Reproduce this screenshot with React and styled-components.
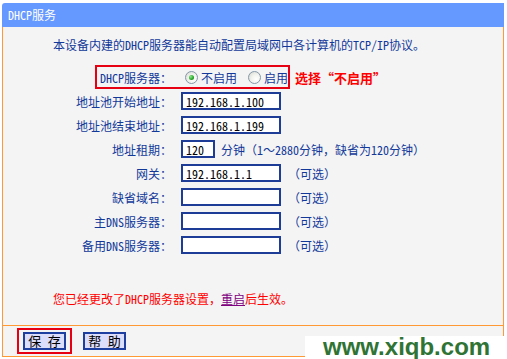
import styled, { createGlobalStyle } from 'styled-components';

const GlobalStyle = createGlobalStyle`
  html, body {
    margin: 0;
    padding: 0;
    background: #fff;
  }
  body {
    font-family: "Noto Sans Mono CJK SC", "Noto Sans CJK SC", sans-serif;
    font-size: 12px;
  }
`;

const Page = styled.div`
  position: relative;
  width: 507px;
  height: 359px;
  padding: 3px 0 0 2px;
  box-sizing: border-box;
  overflow: hidden;
`;

const Panel = styled.div`
  width: 502px;
`;

const TitleBar = styled.div`
  height: 24px;
  line-height: 24px;
  padding-left: 6px;
  background: #6699ff;
  color: #fff;
  border-top-left-radius: 3px;
`;

const Body = styled.div`
  background: #f4f4f4;
  border-left: 1px solid #ff9933;
  border-right: 1px solid #ff9933;
`;

const Main = styled.section`
  height: 298px;
  box-sizing: border-box;
  padding-top: 9px;
`;

const Intro = styled.p`
  margin: 0 0 11px;
  padding-left: 50px;
  line-height: 18px;
  color: #12399a;
`;

const SwitchRow = styled.div`
  display: flex;
  align-items: center;
  padding-left: 92px;
  height: 24px;
`;

const Highlight = styled.div`
  display: flex;
  align-items: center;
  height: 24px;
  box-sizing: border-box;
  border: 2px solid #e60012;
`;

const Row = styled.div`
  display: grid;
  grid-template-columns: ${p => p.$labelWidth || 169}px 1fr;
  column-gap: 9px;
  align-items: center;
  height: 24px;
`;

const Label = styled.label`
  text-align: right;
  white-space: nowrap;
  color: #12399a;
`;

const Field = styled.div`
  display: flex;
  align-items: center;
  white-space: nowrap;
`;

const RadioOption = styled.span`
  display: inline-flex;
  align-items: center;
  gap: 3px;
  margin-left: ${p => p.$offset}px;
  color: #12399a;
`;

const RadioDot = styled.span`
  position: relative;
  width: 11px;
  height: 11px;
  border-radius: 50%;
  border: 1px solid #8597a8;
  background: radial-gradient(circle at 65% 65%, #ffffff 0%, #f2f2ee 45%, #d6d6cf 100%);

  &::after {
    content: '';
    display: ${p => (p.$checked ? 'block' : 'none')};
    position: absolute;
    left: 3px;
    top: 3px;
    width: 5px;
    height: 5px;
    border-radius: 50%;
    background: radial-gradient(circle at 35% 35%, #8ee88e 0%, #22a322 60%, #137913 100%);
  }
`;

const Annotation = styled.span`
  margin-left: 5px;
  color: #ff0000;
  font-size: 13px;
  font-weight: bold;
`;

const TextInput = styled.input`
  width: ${p => p.$width}px;
  height: 18px;
  box-sizing: border-box;
  margin: 0;
  padding: 0 3px;
  border: 2px solid #1d3c98;
  background: #fff;
  color: #000;
  font: inherit;
  font-size: 12px;
`;

const Hint = styled.span`
  margin-left: ${p => p.$gap}px;
  color: #12399a;
`;

const Message = styled.p`
  margin: 33px 0 0;
  padding-left: 50px;
  line-height: 18px;
  color: #ff0000;

  a {
    color: #800080;
    text-decoration: underline;
  }
`;

const Footer = styled.div`
  display: flex;
  align-items: center;
  gap: 11px;
  padding: 2px 0 2px 14px;
  border-top: 1px solid #ff9933;
  border-bottom: 1px solid #ff9933;
`;

const SaveMark = styled.div`
  display: flex;
  padding: 2px 4px;
  border: 2px solid #e60012;
`;

const Button = styled.button`
  width: 43px;
  height: 18px;
  margin: 0;
  padding: 0;
  border: 2px solid #1f3fa0;
  background: #dcdcfb;
  color: #000;
  font: inherit;
  font-size: 13px;
  line-height: 14px;
  white-space: pre;
`;

const Watermark = styled.div`
  position: absolute;
  right: 0;
  bottom: 0;
  width: 202px;
  height: 23px;
  padding-left: 18px;
  box-sizing: border-box;
  background: #fff;
  color: #2f7434;
  font-family: "Liberation Sans", Arial, sans-serif;
  font-size: 24px;
  font-weight: bold;
  line-height: 22px;
`;

const fields = [
  { label: '地址池开始地址：', value: '192.168.1.100', width: 100 },
  { label: '地址池结束地址：', value: '192.168.1.199', width: 100 },
  { label: '地址租期：', value: '120', width: 34, hint: '分钟（1～2880分钟，缺省为120分钟）', gap: 6 },
  { label: '网关：', value: '192.168.1.1', width: 100, hint: '（可选）', gap: 7 },
  { label: '缺省域名：', value: '', width: 100, hint: '（可选）', gap: 7 },
  { label: '主DNS服务器：', value: '', width: 100, hint: '（可选）', gap: 7 },
  { label: '备用DNS服务器：', value: '', width: 100, hint: '（可选）', gap: 7 },
];

export default function App() {
  return (
    <Page>
      <GlobalStyle />
      <Panel>
        <TitleBar>DHCP服务</TitleBar>
        <Body>
          <Main>
            <Intro>本设备内建的DHCP服务器能自动配置局域网中各计算机的TCP/IP协议。</Intro>

            <SwitchRow>
              <Highlight>
                <Row $labelWidth={75}>
                  <Label>DHCP服务器：</Label>
                  <Field>
                    <RadioOption $offset={4}>
                      <RadioDot $checked />
                      不启用
                    </RadioOption>
                    <RadioOption $offset={11}>
                      <RadioDot />
                      启用
                    </RadioOption>
                  </Field>
                </Row>
              </Highlight>
              <Annotation>选择“不启用”</Annotation>
            </SwitchRow>

            {fields.map(f => (
              <Row key={f.label}>
                <Label>{f.label}</Label>
                <Field>
                  <TextInput $width={f.width} defaultValue={f.value} />
                  {f.hint && <Hint $gap={f.gap}>{f.hint}</Hint>}
                </Field>
              </Row>
            ))}

            <Message>
              您已经更改了DHCP服务器设置，<a href="#">重启</a>后生效。
            </Message>
          </Main>

          <Footer>
            <SaveMark>
              <Button>保 存</Button>
            </SaveMark>
            <Button>帮 助</Button>
          </Footer>
        </Body>
      </Panel>
      <Watermark>www.xiqb.com</Watermark>
    </Page>
  );
}
